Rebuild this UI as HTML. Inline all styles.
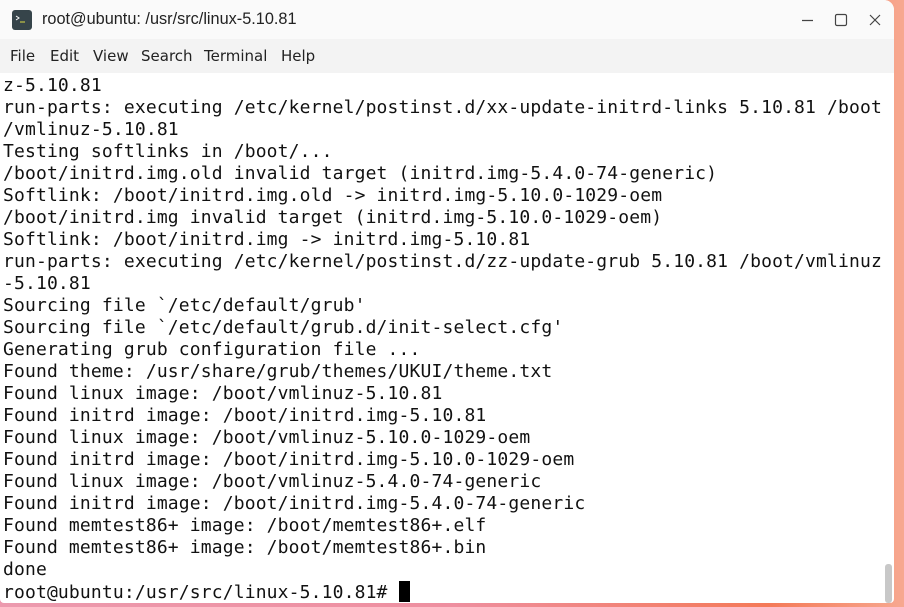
<!DOCTYPE html>
<html><head><meta charset="utf-8"><style>
html,body{margin:0;padding:0;width:904px;height:607px;overflow:hidden;
background:linear-gradient(90deg,#ec9aae 0%,#ee8fa0 50%,#f47a58 85%,#f7a890 100%);}
.win{position:absolute;left:0;top:0;width:894px;height:603px;background:#fff;border-radius:0 10px 4px 4px;overflow:hidden;}
.title{position:absolute;left:0;top:0;width:100%;height:39px;background:#fafafa;}
.title .ic{position:absolute;left:12px;top:10px;width:20px;height:20px;background:#36444a;border-radius:3px;}
.title .t{position:absolute;left:42px;top:10px;font:16.3px "Liberation Sans","DejaVu Sans",sans-serif;color:#222;}
.menu{position:absolute;left:0;top:39px;width:100%;height:34px;background:#f3f3f3;font:15px "DejaVu Sans","Liberation Sans",sans-serif;color:#222;}
.menu span{position:absolute;top:8px;}
.term{position:absolute;left:3px;top:75px;font:18px/22px "DejaVu Sans Mono","Liberation Mono",monospace;letter-spacing:0.15px;color:#111;white-space:pre;}
.cur{display:inline-block;width:11px;height:21px;background:#000;vertical-align:-4px;}
.sb{position:absolute;left:885px;top:564px;width:7px;height:39px;background:#c8c8c8;border-radius:3px;}
</style></head><body>
<div class="win">
<div class="title"><div class="ic"><svg width="20" height="20"><path d="M4 6l3 2-3 2" stroke="#fff" fill="none" stroke-width="1"/><path d="M8 12h5" stroke="#dd4" stroke-width="1"/></svg></div>
<div class="t">root@ubuntu: /usr/src/linux-5.10.81</div>
<svg style="position:absolute;left:800px;top:10px" width="90" height="20"><path d="M2 10.5h11" stroke="#444" stroke-width="1.2"/><rect x="35.5" y="4.5" width="11" height="11" rx="1.5" fill="none" stroke="#444" stroke-width="1.2"/><path d="M70 5l10 10M80 5l-10 10" stroke="#444" stroke-width="1.2"/></svg>
</div>
<div class="menu"><span style="left:10px">File</span><span style="left:50px">Edit</span><span style="left:93px">View</span><span style="left:141px">Search</span><span style="left:204px">Terminal</span><span style="left:281px">Help</span></div>
<div class="term">z-5.10.81
run-parts: executing /etc/kernel/postinst.d/xx-update-initrd-links 5.10.81 /boot
/vmlinuz-5.10.81
Testing softlinks in /boot/...
/boot/initrd.img.old invalid target (initrd.img-5.4.0-74-generic)
Softlink: /boot/initrd.img.old -> initrd.img-5.10.0-1029-oem
/boot/initrd.img invalid target (initrd.img-5.10.0-1029-oem)
Softlink: /boot/initrd.img -> initrd.img-5.10.81
run-parts: executing /etc/kernel/postinst.d/zz-update-grub 5.10.81 /boot/vmlinuz
-5.10.81
Sourcing file `/etc/default/grub'
Sourcing file `/etc/default/grub.d/init-select.cfg'
Generating grub configuration file ...
Found theme: /usr/share/grub/themes/UKUI/theme.txt
Found linux image: /boot/vmlinuz-5.10.81
Found initrd image: /boot/initrd.img-5.10.81
Found linux image: /boot/vmlinuz-5.10.0-1029-oem
Found initrd image: /boot/initrd.img-5.10.0-1029-oem
Found linux image: /boot/vmlinuz-5.4.0-74-generic
Found initrd image: /boot/initrd.img-5.4.0-74-generic
Found memtest86+ image: /boot/memtest86+.elf
Found memtest86+ image: /boot/memtest86+.bin
done
root@ubuntu:/usr/src/linux-5.10.81# <span class="cur"></span></div>
<div class="sb"></div>
</div>
</body></html>
